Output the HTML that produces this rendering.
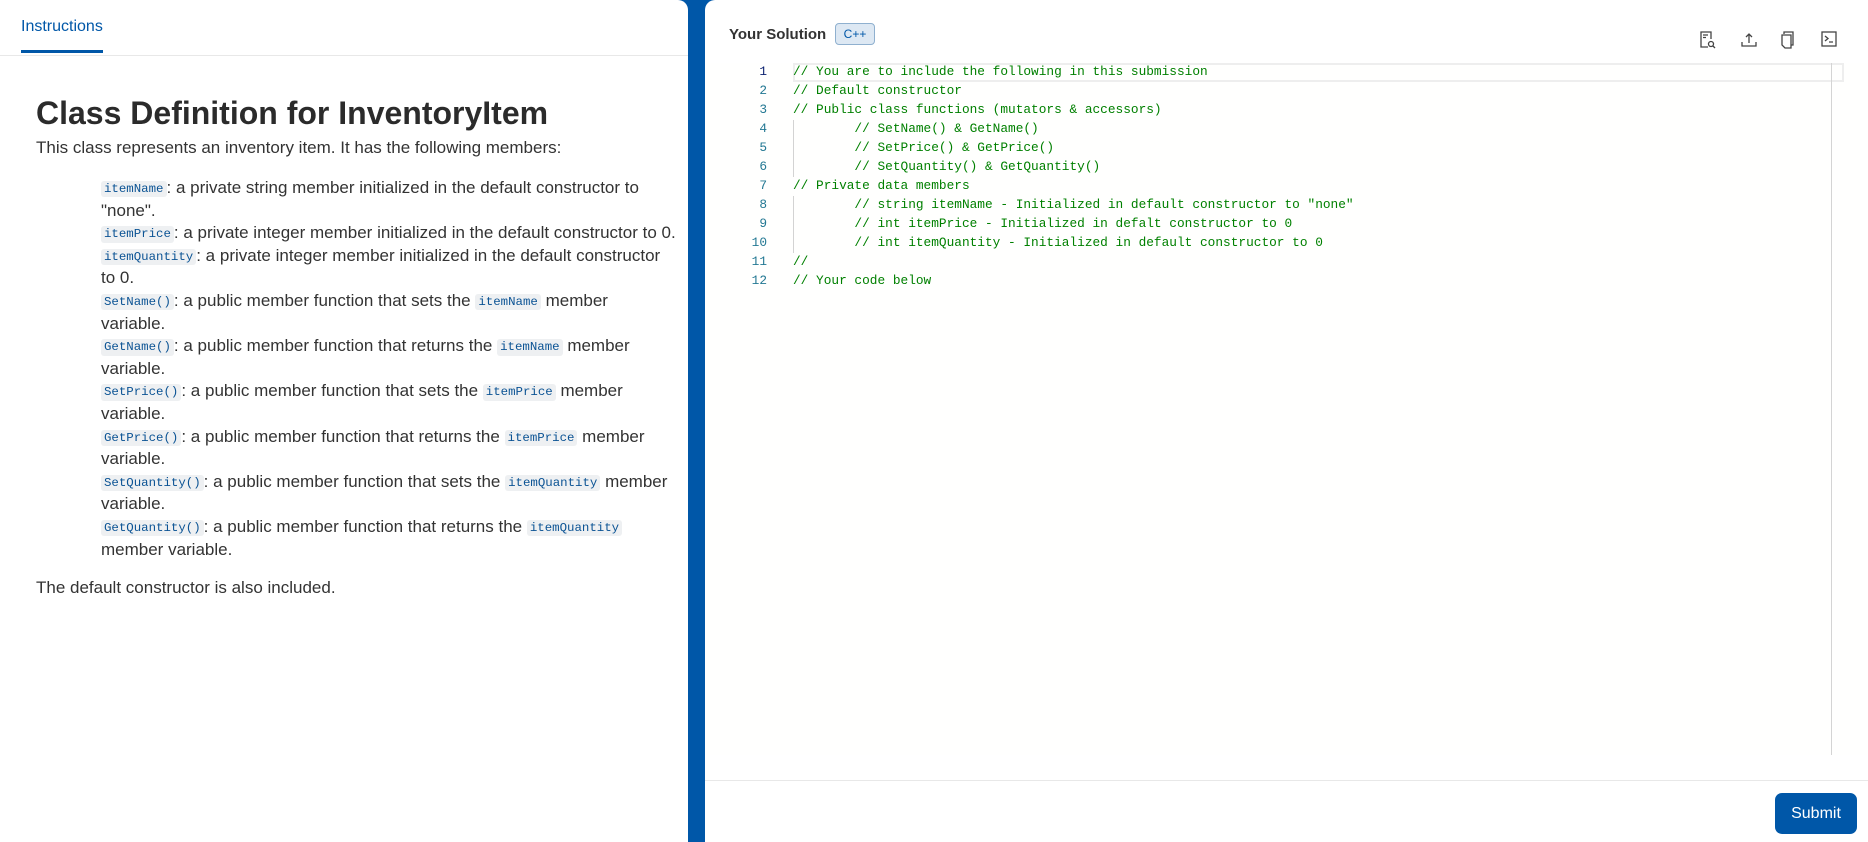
<!DOCTYPE html>
<html><head><meta charset="utf-8"><style>
*{box-sizing:border-box;margin:0;padding:0}
body{width:1868px;height:842px;background:#0057a8;font-family:"Liberation Sans",Arial,sans-serif;position:relative;overflow:hidden}
#left{position:absolute;left:0;top:0;width:688px;height:842px;background:#fff;border-top-right-radius:10px}
#right{position:absolute;left:705px;top:0;width:1163px;height:842px;background:#fff;border-top-left-radius:10px}
.tabbar{height:56px;border-bottom:1px solid #e8e8e8;position:relative}
.tab{position:absolute;left:21px;top:18px;color:#0057a8;font-size:16px;padding-bottom:14px;border-bottom:3px solid #0057a8;width:82px}
h1{position:absolute;left:36px;top:95px;font-size:32px;color:#2b2b2b;font-weight:bold;white-space:nowrap}
.p{position:absolute;left:36px;font-size:17px;color:#333;white-space:nowrap}
ul{position:absolute;left:101px;top:177px;list-style:none;font-size:17px;line-height:22.6px;color:#333;white-space:nowrap}
code{font-family:"Liberation Mono",monospace;font-size:12.4px;line-height:1;color:#0b5394;background:#eef0f2;border-radius:3px;padding:2px 3px;display:inline-block;vertical-align:1px}
.hdr{position:absolute;left:24px;top:26px;font-size:15px;font-weight:bold;color:#333}
.badge{position:absolute;left:130px;top:23px;width:40px;height:22px;border:1px solid #8fb0cf;background:#dde8f3;border-radius:4px;font-size:12px;color:#0057a8;text-align:center;line-height:20px}
.ed{position:absolute;left:0;top:63px;width:1163px;height:692px;background:#fffffe}
.cur{position:absolute;left:88px;top:0;width:1051px;height:19px;border:2px solid #eeeeee}
.vl{position:absolute;left:1126px;top:0;width:1px;height:692px;background:#d4d4d4}
.ln{position:absolute;left:0;width:62px;text-align:right;font-family:"Liberation Mono",monospace;font-size:12.8px;color:#237893}
.cd{position:absolute;left:88px;font-family:"Liberation Mono",monospace;font-size:12.8px;color:#008000;white-space:pre}
.guide{position:absolute;left:88px;width:1px;background:#d3d3d3}
.foot{position:absolute;left:0;top:780px;width:1163px;height:1px;background:#e8e8e8}
.sub{position:absolute;left:1070px;top:793px;width:82px;height:41px;background:#0057a8;color:#fff;border-radius:7px;font-size:16px;text-align:center;line-height:41px}
.ic{position:absolute;top:31px}
</style></head><body>
<div id="left">
<div class="tabbar"><div class="tab">Instructions</div></div>
<h1>Class Definition for InventoryItem</h1>
<div class="p" style="top:138px">This class represents an inventory item. It has the following members:</div>
<ul>
<li><code>itemName</code>: a private string member initialized in the default constructor to<br>"none".</li>
<li><code>itemPrice</code>: a private integer member initialized in the default constructor to 0.</li>
<li><code>itemQuantity</code>: a private integer member initialized in the default constructor<br>to 0.</li>
<li><code>SetName()</code>: a public member function that sets the <code>itemName</code> member<br>variable.</li>
<li><code>GetName()</code>: a public member function that returns the <code>itemName</code> member<br>variable.</li>
<li><code>SetPrice()</code>: a public member function that sets the <code>itemPrice</code> member<br>variable.</li>
<li><code>GetPrice()</code>: a public member function that returns the <code>itemPrice</code> member<br>variable.</li>
<li><code>SetQuantity()</code>: a public member function that sets the <code>itemQuantity</code> member<br>variable.</li>
<li><code>GetQuantity()</code>: a public member function that returns the <code>itemQuantity</code><br>member variable.</li>
</ul>
<div class="p" style="top:578px">The default constructor is also included.</div>
</div>
<div id="right">
<div class="hdr">Your Solution</div><div class="badge">C++</div>
<svg class="ic" style="left:995px" width="16" height="18" viewBox="0 0 16 18" fill="none" stroke="#444" stroke-width="1.3"><path d="M11 8V1H1v15h7"/><path d="M3 4h5M3 6.5h3"/><circle cx="11" cy="13" r="2.5"/><path d="M13 15l2 2"/></svg>
<svg class="ic" style="left:1036px" width="16" height="16" viewBox="0 0 16 16" fill="none" stroke="#444" stroke-width="1.3"><path d="M1 11v4h14v-4M8 12V3M5 6l3-3 3 3"/></svg>
<svg class="ic" style="left:1075px" width="16" height="18" viewBox="0 0 16 18" fill="none" stroke="#444" stroke-width="1.3"><path d="M4 3V1h9v13h-2"/><path d="M2 4h9v13H5l-3-3z"/></svg>
<svg class="ic" style="left:1116px" width="16" height="16" viewBox="0 0 16 16" fill="none" stroke="#444" stroke-width="1.3"><rect x="1" y="1" width="14" height="14"/><path d="M4 5l3 2.5L4 10M8 11h4"/></svg>
<div class="ed">
<div class="cur"></div><div class="vl"></div>
<div class="guide" style="top:57px;height:57px"></div>
<div class="guide" style="top:133px;height:57px"></div>
<div class="ln" style="top:1px;color:#0b216f">1</div><div class="ln" style="top:20px">2</div><div class="ln" style="top:39px">3</div><div class="ln" style="top:58px">4</div><div class="ln" style="top:77px">5</div><div class="ln" style="top:96px">6</div><div class="ln" style="top:115px">7</div><div class="ln" style="top:134px">8</div><div class="ln" style="top:153px">9</div><div class="ln" style="top:172px">10</div><div class="ln" style="top:191px">11</div><div class="ln" style="top:210px">12</div>
<div class="cd" style="top:1px">// You are to include the following in this submission</div>
<div class="cd" style="top:20px">// Default constructor</div>
<div class="cd" style="top:39px">// Public class functions (mutators &amp; accessors)</div>
<div class="cd" style="top:58px">        // SetName() &amp; GetName()</div>
<div class="cd" style="top:77px">        // SetPrice() &amp; GetPrice()</div>
<div class="cd" style="top:96px">        // SetQuantity() &amp; GetQuantity()</div>
<div class="cd" style="top:115px">// Private data members</div>
<div class="cd" style="top:134px">        // string itemName - Initialized in default constructor to "none"</div>
<div class="cd" style="top:153px">        // int itemPrice - Initialized in defalt constructor to 0</div>
<div class="cd" style="top:172px">        // int itemQuantity - Initialized in default constructor to 0</div>
<div class="cd" style="top:191px">//</div>
<div class="cd" style="top:210px">// Your code below</div>
</div>
<div class="foot"></div>
<div class="sub">Submit</div>
</div>
</body></html>
